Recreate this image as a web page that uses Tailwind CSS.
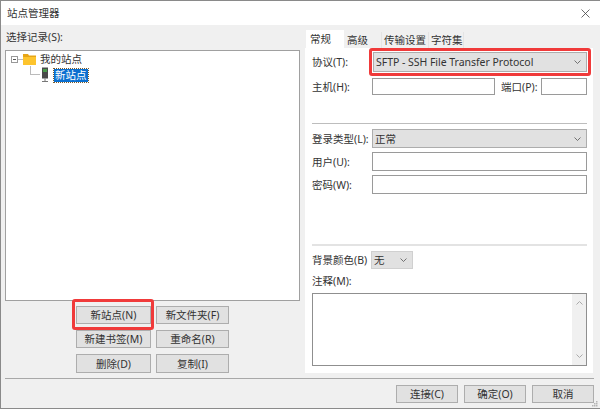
<!DOCTYPE html>
<html lang="zh-CN">

<head>
    <meta charset="UTF-8">
    <title>站点管理器</title>
    <script src="https://cdn.jsdelivr.net/npm/@tailwindcss/browser@4"></script>
</head>

<body class="m-0 w-[600px] h-[409px] overflow-hidden bg-[#f0f0f0] text-[10.5px] leading-[14px] text-[#333] font-['Noto_Sans','Noto_Sans_CJK_SC',sans-serif]">
    <div class="relative w-[600px] h-[409px] flex flex-col border-t border-l border-b border-[#8a8a8a]">
        <!-- title bar -->
        <div class="h-[24px] shrink-0 bg-white flex items-center justify-between pl-[6px] pr-[10px]">
            <span>站点管理器</span>
            <svg width="9" height="9" viewBox="0 0 9 9" fill="none" stroke="#444" stroke-width="0.8">
                <path d="M0.5 0.5l8 8M8.5 0.5l-8 8" />
            </svg>
        </div>

        <div class="flex h-[349px] shrink-0">
            <!-- left column -->
            <div class="w-[299px] shrink-0 pl-[4px] flex flex-col">
                <div class="h-[25px] pt-[5px] pl-px">选择记录(S):</div>
                <div class="w-[295px] h-[251px] shrink-0 bg-white border border-[#a0a0a0] pl-[5px]">
                    <div class="flex items-center h-[16px]">
                        <span class="w-[7px] h-[7px] border border-[#999] flex items-center justify-center">
                            <span class="w-[3px] h-px bg-[#555]"></span>
                        </span>
                        <span class="w-[5px] h-px bg-[#bbb]"></span>
                        <svg width="13" height="11" viewBox="0 0 13 11" class="mr-[4px]">
                            <path d="M0 0h5l1 1.5h7V4H0z" fill="#e6a516" />
                            <path d="M0 3h13V11H0z" fill="#fdc42d" />
                        </svg>
                        <span>我的站点</span>
                    </div>
                    <div class="flex items-center h-[16px] pl-[19px]">
                        <span class="w-[10px] h-[9px] self-start -mt-px border-l border-b border-[#bbb]"></span>
                        <svg width="10" height="16" viewBox="0 0 10 16" class="mr-[4px]">
                            <path d="M2 0.5h6v11H2z" fill="#4a4a4a" />
                            <path d="M3 2h4v3H3z" fill="#4a9a4a" />
                            <path d="M5 11.5v3M2 14.5h6" stroke="#777" fill="none" />
                        </svg>
                        <span class="h-[13px] leading-[12px] bg-[#0a6fd0] text-white px-px outline outline-dotted outline-[#7a5a2a]">新站点</span>
                    </div>
                </div>

                <div class="grid grid-cols-[75px_73px] gap-x-[5px] gap-y-[6px] ml-[71px] mt-[5px] text-center">
                    <button class="relative h-[18px] bg-[#e1e1e1] border border-[#adadad]">新站点(N)
                        <span class="absolute -left-[5px] -top-[8px] w-[82px] h-[31px] border-[3px] border-[#f03a3a] rounded-[3px]"></span>
                    </button>
                    <button class="h-[18px] bg-[#e1e1e1] border border-[#adadad]">新文件夹(F)</button>
                    <button class="h-[18px] bg-[#e1e1e1] border border-[#adadad]">新建书签(M)</button>
                    <button class="h-[18px] bg-[#e1e1e1] border border-[#adadad]">重命名(R)</button>
                    <button class="h-[19px] bg-[#e1e1e1] border border-[#adadad]">删除(D)</button>
                    <button class="h-[19px] bg-[#e1e1e1] border border-[#adadad]">复制(I)</button>
                </div>
            </div>

            <!-- right column -->
            <div class="w-[288px] ml-[5px] shrink-0 flex flex-col pt-[5px]">
                <div class="flex h-[18px] items-end whitespace-nowrap">
                    <div class="w-[38px] h-[18px] bg-white pl-[4px] pt-[2px] ml-px">常规</div>
                    <div class="w-[37px] h-[16px] pl-[3px] pt-px">高级</div>
                    <div class="w-[47px] h-[16px] border-l border-[#e4e4e4] pl-[2px] pt-px">传输设置</div>
                    <div class="w-[36px] h-[16px] border-x border-[#e4e4e4] pl-[2px] pt-px">字符集</div>
                </div>
                <div class="h-[325px] bg-white pl-[7px] pr-[6px] flex flex-col">
                    <div class="relative flex items-center h-[20px] mt-[4px]">
                        <span class="w-[61px] shrink-0">协议(T):</span>
                        <div class="w-[214px] h-[20px] flex items-center justify-between pl-[2px] pr-[5px] bg-[#e1e1e1] border border-[#adadad] tracking-[-0.03px]">
                            <span>SFTP - SSH File Transfer Protocol</span>
                            <svg width="7" height="4" viewBox="0 0 7 4" fill="none" stroke="#555" stroke-width="0.8"><path d="M0.5 0.5l3 3 3-3" /></svg>
                        </div>
                        <span class="absolute left-[57px] -top-[4px] w-[222px] h-[28px] border-[3px] border-[#f03a3a] rounded-[3px]"></span>
                    </div>
                    <div class="flex items-center h-[17px] mt-[6px]">
                        <span class="w-[60px] shrink-0">主机(H):</span>
                        <div class="w-[123px] h-[17px] border border-[#9a9a9a] bg-white"></div>
                        <span class="ml-[6px] w-[40px]">端口(P):</span>
                        <div class="w-[46px] h-[17px] border border-[#9a9a9a] bg-white"></div>
                    </div>
                    <div class="h-px bg-[#bdbdbd] mt-[28px]"></div>
                    <div class="flex items-center h-[19px] mt-[5px]">
                        <span class="w-[60px] shrink-0">登录类型(L):</span>
                        <div class="w-[215px] h-[19px] flex items-center justify-between pl-[2px] pr-[5px] bg-[#e1e1e1] border border-[#adadad]">
                            <span>正常</span>
                            <svg width="7" height="4" viewBox="0 0 7 4" fill="none" stroke="#555" stroke-width="0.8"><path d="M0.5 0.5l3 3 3-3" /></svg>
                        </div>
                    </div>
                    <div class="flex items-center h-[19px] mt-[4px]">
                        <span class="w-[60px] shrink-0">用户(U):</span>
                        <div class="w-[215px] h-[19px] border border-[#9a9a9a] bg-white"></div>
                    </div>
                    <div class="flex items-center h-[19px] mt-[4px]">
                        <span class="w-[60px] shrink-0">密码(W):</span>
                        <div class="w-[215px] h-[19px] border border-[#9a9a9a] bg-white"></div>
                    </div>
                    <div class="h-[2px] bg-[#e3e3e3] mt-[50px]"></div>
                    <div class="flex items-center h-[18px] mt-[5px]">
                        <span class="w-[59px] shrink-0 whitespace-nowrap">背景颜色(B)</span>
                        <div class="w-[42px] h-[18px] flex items-center justify-between pl-[2px] pr-[5px] bg-[#e1e1e1] border border-[#d0d0d0]">
                            <span>无</span>
                            <svg width="7" height="4" viewBox="0 0 7 4" fill="none" stroke="#555" stroke-width="0.8"><path d="M0.5 0.5l3 3 3-3" /></svg>
                        </div>
                    </div>
                    <div class="h-[14px] mt-[5px]">注释(M):</div>
                    <div class="w-[275px] h-[73px] mt-[5px] border border-[#8f8f8f] bg-white flex justify-end">
                        <div class="w-[14px] bg-[#f0f0f0] flex flex-col items-center justify-between py-[7px]">
                            <svg width="7" height="4" viewBox="0 0 7 4" fill="none" stroke="#aaa"><path d="M0.5 3.5l3-3 3 3" /></svg>
                            <svg width="7" height="4" viewBox="0 0 7 4" fill="none" stroke="#aaa"><path d="M0.5 0.5l3 3 3-3" /></svg>
                        </div>
                    </div>
                </div>
            </div>
        </div>

        <!-- bottom bar -->
        <div class="h-px bg-[#a8a8a8] shrink-0 ml-[4px] mr-[6px] mt-[4px]"></div>
        <div class="flex justify-end gap-[6px] pr-[6px] pt-[6px] text-center">
            <button class="w-[62px] h-[18px] bg-[#e1e1e1] border border-[#adadad]">连接(C)</button>
            <button class="w-[62px] h-[18px] bg-[#e1e1e1] border border-[#adadad]">确定(O)</button>
            <button class="w-[62px] h-[18px] bg-[#e1e1e1] border border-[#adadad]">取消</button>
        </div>
        <!-- resize grip -->
        <svg width="6" height="6" viewBox="0 0 6 6" fill="#b5b5b5" class="absolute right-[2px] bottom-px">
            <path d="M4 0h1.500v1.500H4zM2 2h1.500v1.500H2zM4 2h1.500v1.500H4zM0 4h1.500v1.500H0zM2 4h1.500v1.500H2zM4 4h1.500v1.500H4z" />
        </svg>
    </div>
</body>

</html>
